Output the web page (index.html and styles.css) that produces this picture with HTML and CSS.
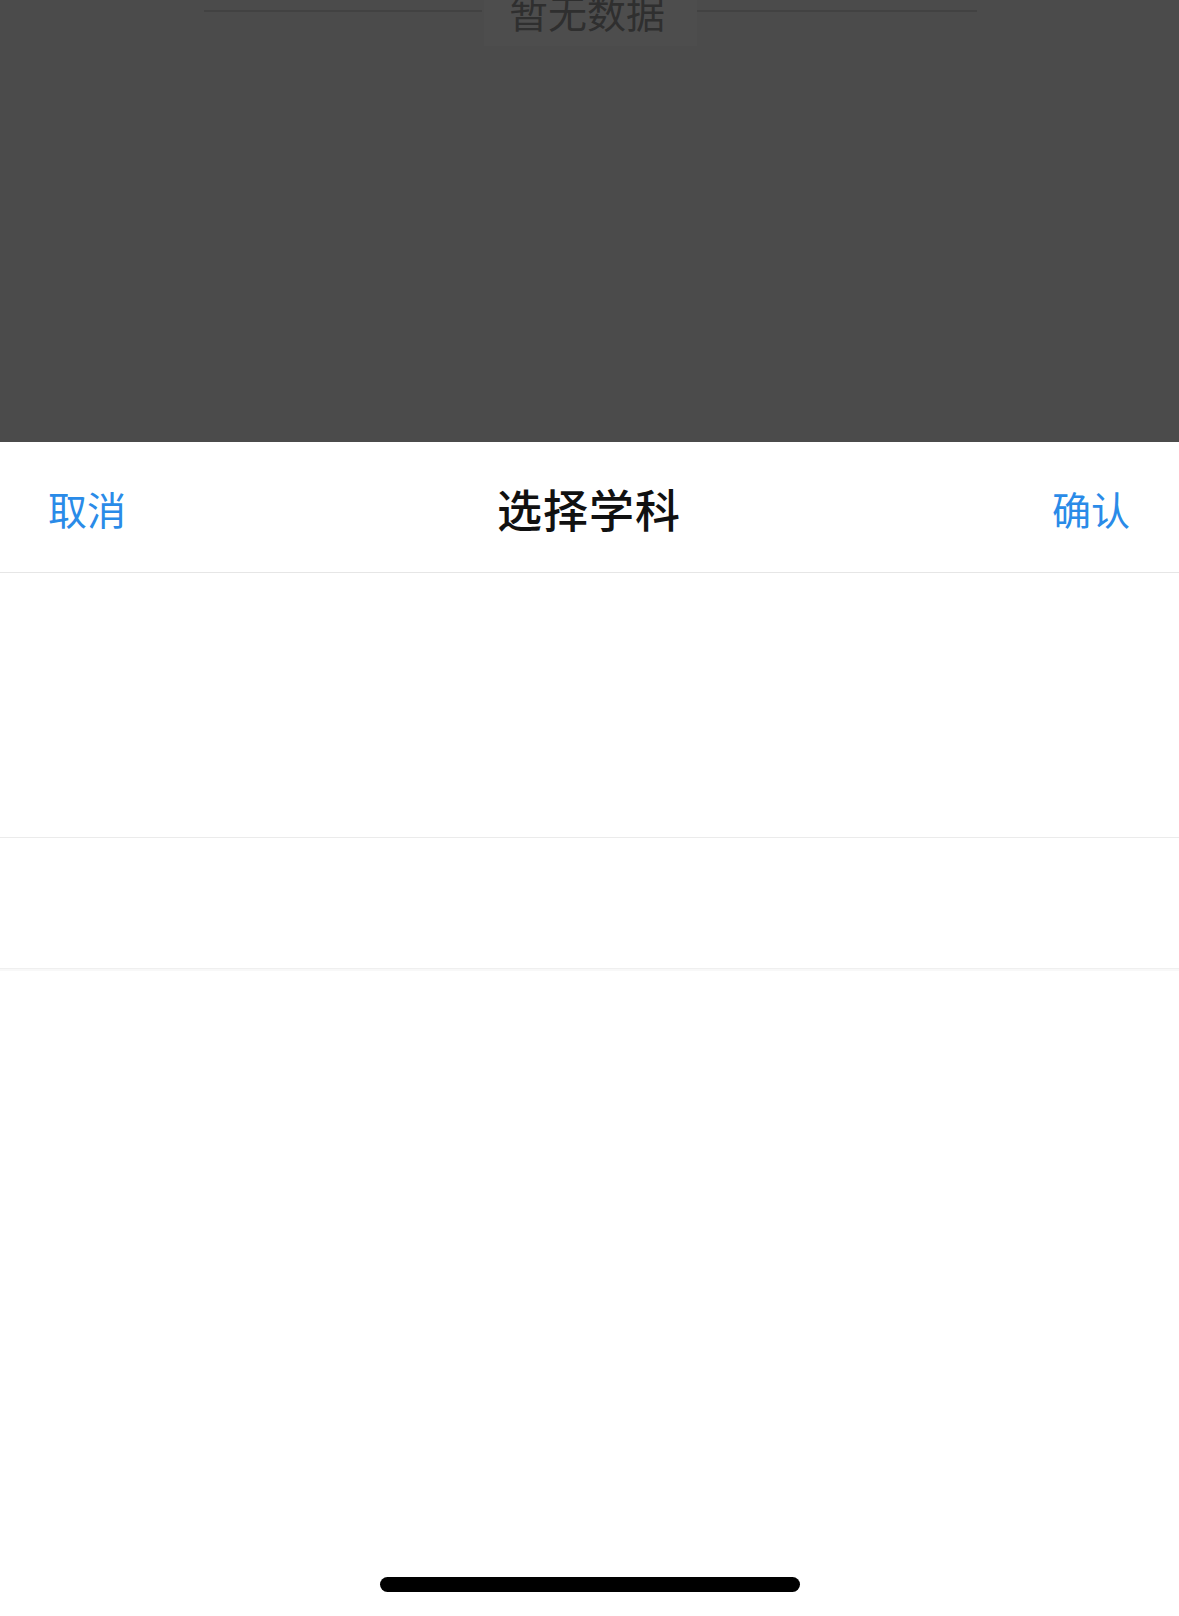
FILE: index.html
```html
<!DOCTYPE html>
<html lang="zh-CN">
<head>
    <meta charset="UTF-8">
    <meta name="viewport" content="width=device-width, initial-scale=1.0">
    <title>选择学科</title>
    <link rel="stylesheet" href="styles.css">
</head>
<body>
    <div class="backdrop">
        <div class="empty-row">
            <span class="empty-line"></span>
            <div class="empty-box">暂无数据</div>
            <span class="empty-line right"></span>
        </div>
    </div>

    <div class="sheet">
        <div class="sheet-header">
            <span class="action cancel">取消</span>
            <span class="sheet-title">选择学科</span>
            <span class="action confirm">确认</span>
        </div>

        <div class="picker">
            <div class="picker-spacer"></div>
            <div class="picker-indicator"></div>
        </div>

        <div class="home-bar">
            <span class="home-indicator"></span>
        </div>
    </div>
</body>
</html>
```

FILE: styles.css
```css
* {
    box-sizing: border-box;
}
body {
    margin: 0;
    width: 1179px;
    height: 1616px;
    overflow: hidden;
    font-family: "Noto Sans CJK SC", "Noto Sans", sans-serif;
    background-color: #ffffff;
}
.backdrop {
    height: 442px;
    background-color: #4b4b4b;
    overflow: hidden;
}
.empty-row {
    display: flex;
    align-items: center;
    justify-content: center;
    height: 70px;
    margin-top: -24px;
    padding-left: 2px;
}
.empty-line {
    width: 278px;
    height: 2px;
    background-color: #424242;
}
.empty-line.right {
    width: 280px;
}
.empty-box {
    width: 213px;
    height: 70px;
    margin-left: 2px;
    padding-left: 25px;
    line-height: 70px;
    font-size: 39px;
    color: #2f2f2f;
    background-color: #4d4d4d;
    white-space: nowrap;
}
.sheet {
    height: 1174px;
    display: flex;
    flex-direction: column;
    background-color: #ffffff;
}
.sheet-header {
    height: 131px;
    display: grid;
    grid-template-columns: 1fr auto 1fr;
    align-items: center;
    padding: 2px 49px 0 48px;
    border-bottom: 1px solid #e6e6e6;
}
.action {
    font-size: 39px;
    color: #2a8be8;
}
.confirm {
    justify-self: end;
}
.sheet-title {
    font-size: 45px;
    font-weight: 500;
    color: #111111;
    letter-spacing: 1px;
}
.picker {
    flex: 1;
    display: flex;
    flex-direction: column;
}
.picker-spacer {
    height: 264px;
}
.picker-indicator {
    height: 132px;
    border-top: 1px solid #ebebeb;
    border-bottom: 1px solid #efefef;
    box-shadow: 0 2px 0 #f8f8f8;
}
.home-bar {
    display: flex;
    justify-content: center;
    padding-bottom: 24px;
}
.home-indicator {
    width: 420px;
    height: 15px;
    border-radius: 8px;
    background-color: #000000;
}
```
